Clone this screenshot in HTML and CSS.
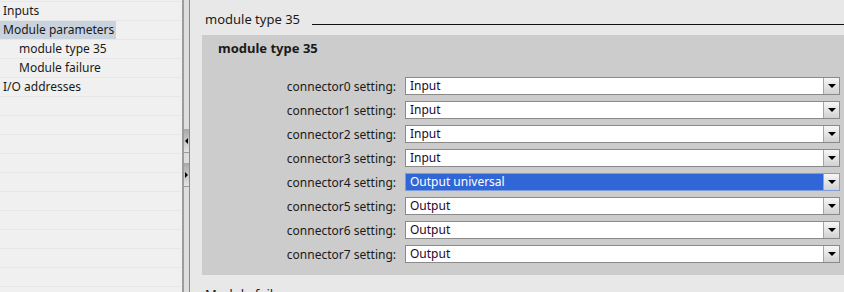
FILE: index.html
```html
<!DOCTYPE html>
<html>
<head>
<meta charset="utf-8">
<link rel="stylesheet" href="styles.css">
</head>
<body>
<div class="app">
  <nav class="tree">
    <div class="row"><span class="lbl">Inputs</span></div>
    <div class="row"><span class="lbl sel">Module parameters</span></div>
    <div class="row sub"><span class="lbl">module type 35</span></div>
    <div class="row sub"><span class="lbl">Module failure</span></div>
    <div class="row"><span class="lbl">I/O addresses</span></div>
    <div class="row"></div><div class="row"></div><div class="row"></div>
    <div class="row"></div><div class="row"></div><div class="row"></div>
    <div class="row"></div><div class="row"></div><div class="row"></div>
    <div class="row"></div><div class="row"></div>
  </nav>
  <div class="splitter">
    <div class="sbtn"><span class="tri-l"></span></div>
    <div class="sbtn"><span class="tri-r"></span></div>
  </div>
  <main class="content">
    <section class="sec">
      <div class="sec-title"><span class="sec-name">module type 35</span><span class="rule"></span></div>
      <div class="box">
        <div class="box-head">module type 35</div>
        <div class="field"><label>connector0 setting:</label><div class="combo"><span class="val">Input</span><span class="btn"><i class="arrow"></i></span></div></div>
        <div class="field"><label>connector1 setting:</label><div class="combo"><span class="val">Input</span><span class="btn"><i class="arrow"></i></span></div></div>
        <div class="field"><label>connector2 setting:</label><div class="combo"><span class="val">Input</span><span class="btn"><i class="arrow"></i></span></div></div>
        <div class="field"><label>connector3 setting:</label><div class="combo"><span class="val">Input</span><span class="btn"><i class="arrow"></i></span></div></div>
        <div class="field"><label>connector4 setting:</label><div class="combo active"><span class="val">Output universal</span><span class="btn"><i class="arrow"></i></span></div></div>
        <div class="field"><label>connector5 setting:</label><div class="combo"><span class="val">Output</span><span class="btn"><i class="arrow"></i></span></div></div>
        <div class="field"><label>connector6 setting:</label><div class="combo"><span class="val">Output</span><span class="btn"><i class="arrow"></i></span></div></div>
        <div class="field"><label>connector7 setting:</label><div class="combo"><span class="val">Output</span><span class="btn"><i class="arrow"></i></span></div></div>
      </div>
    </section>
    <section class="sec">
      <div class="sec-title"><span class="sec-name">Module failure</span><span class="rule"></span></div>
    </section>
  </main>
</div>
</body>
</html>
```
FILE: styles.css
```css
html, body {
  margin: 0;
  height: 100%;
  overflow: hidden;
}
body {
  background: #e8e8e8;
  font-family: "Noto Sans", "Open Sans", sans-serif;
  font-size: 12px;
  color: #1a1a1a;
}
.app {
  display: flex;
  height: 292px;
}
.tree {
  width: 182px;
  flex: none;
  box-sizing: border-box;
  background: #f0f0f0;
  padding-top: 1px;
  padding-right: 1px;
  overflow: hidden;
}
.row {
  height: 18px;
  border-top: 1px solid #e7e7e7;
  display: flex;
  align-items: stretch;
}
.lbl {
  padding: 0 2px 0 3px;
  line-height: 18px;
}
.lbl.sel {
  background: #c9d3de;
}
.sub .lbl {
  padding-left: 19px;
}
.splitter {
  width: 8px;
  flex: none;
  box-sizing: border-box;
  border-left: 2px solid #9c9c9c;
  border-right: 1px solid #8a8a8a;
  background: #dedede;
  padding-top: 129px;
  display: flex;
  flex-direction: column;
  gap: 10px;
}
.sbtn {
  height: 23px;
  border-bottom: 1px solid #9a9a9a;
  background: linear-gradient(#a8a8a8, #e4e4e4);
  display: flex;
  align-items: center;
  justify-content: center;
}
.tri-l {
  width: 0;
  height: 0;
  border-top: 3px solid transparent;
  border-bottom: 3px solid transparent;
  border-right: 3px solid #000;
}
.tri-r {
  width: 0;
  height: 0;
  border-top: 3px solid transparent;
  border-bottom: 3px solid transparent;
  border-left: 3px solid #000;
}
.content {
  flex: 1;
  min-width: 0;
  padding-left: 12px;
  overflow: hidden;
}
.sec-title {
  height: 35px;
  box-sizing: border-box;
  padding: 10px 0 0 3px;
  display: flex;
  align-items: flex-start;
}
.sec-name {
  font-size: 13px;
  line-height: 18px;
  white-space: nowrap;
}
.rule {
  flex: 1;
  height: 1px;
  background: #111;
  margin: 14px 0 0 12px;
}
.box {
  background: #cccccc;
  padding: 5px 0 9px 0;
}
.box-head {
  font-weight: bold;
  font-size: 13px;
  line-height: 16px;
  padding: 0 0 18px 16px;
}
.field {
  height: 24px;
  display: flex;
  align-items: center;
}
.field label {
  width: 194px;
  flex: none;
  text-align: right;
  margin-right: 9px;
}
.combo {
  flex: 1;
  margin-right: 4px;
  height: 18px;
  box-sizing: border-box;
  border: 1px solid #8a8a8a;
  background: #fff;
  display: flex;
}
.val {
  flex: 1;
  padding-left: 4px;
  line-height: 16px;
  color: #24082a;
}
.combo.active {
  background: #3166d6;
  border-color: #7d9cd8;
}
.combo.active .val {
  color: #fff;
}
.btn {
  width: 15px;
  border-left: 1px solid #a4a4a4;
  background: linear-gradient(#f6f6f6, #d2d2d2);
  display: flex;
  align-items: center;
  justify-content: center;
}
.arrow {
  width: 0;
  height: 0;
  border-left: 4px solid transparent;
  border-right: 4px solid transparent;
  border-top: 4px solid #000;
}
```
